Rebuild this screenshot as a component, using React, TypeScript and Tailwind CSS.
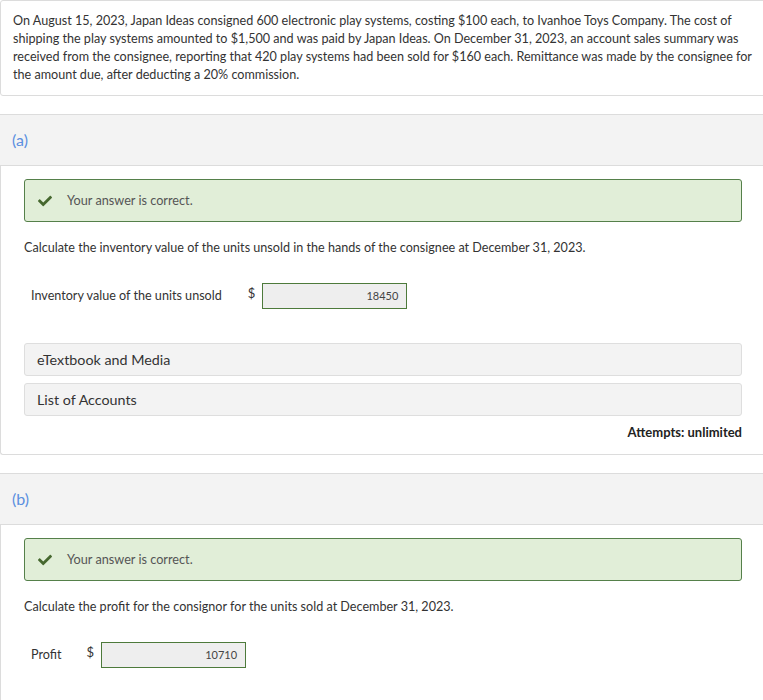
function Check() {
  return (
    <svg viewBox="0 0 512 512" className="w-[14px] h-[14px] fill-[#46682f]">
      <path d="M173.898 439.404l-166.4-166.4c-9.997-9.997-9.997-26.206 0-36.204l36.203-36.204c9.997-9.998 26.207-9.998 36.204 0L192 312.69 432.095 72.596c9.997-9.997 26.207-9.997 36.204 0l36.203 36.204c9.997 9.997 9.997 26.206 0 36.204l-294.4 294.401c-9.998 9.997-26.207 9.997-36.204-.001z" />
    </svg>
  );
}

function Correct() {
  return (
    <div className="h-[43px] flex items-center border border-[#55804a] bg-[#e1eed8] rounded-[3px] pl-[13px]">
      <Check />
      <span className="ml-[15px] text-[12.7px] text-[#555]">Your answer is correct.</span>
    </div>
  );
}

function Answer({ label, value, gap }: { label: string; value: string; gap: string }) {
  return (
    <div className="flex items-center pl-[7px] h-[26px]">
      <span className="text-[12.6px] text-[#333]">{label}</span>
      <span className={`text-[13px] text-[#333] -mt-[4px] ${gap}`}>$</span>
      <div className="ml-[7px] w-[145px] h-[26px] bg-[#eeeeee] border border-[#4d7a3b] flex items-center justify-end pr-[8px] text-[11px] text-[#444]">
        {value}
      </div>
    </div>
  );
}

function Header({ part }: { part: string }) {
  return (
    <div className="h-[52px] bg-[#f3f3f3] border-t border-b border-[#dcdcdc] flex items-center pl-[12px] text-[16px] text-[#5b8fe0]">
      {part}
    </div>
  );
}

export default function App() {
  return (
    <div className="w-[763px] overflow-hidden bg-white font-[Lato,sans-serif]">
      <div className="w-[770px]">
        <div className="border border-[#dcdcdc] rounded-[3px] px-[12px] pt-[11px] pb-[12px] h-[96px] text-[12.6px] leading-[18px] text-[#333] pr-[16px]">
          On August 15, 2023, Japan Ideas consigned 600 electronic play systems, costing $100 each, to Ivanhoe Toys Company. The cost of shipping the play systems amounted to $1,500 and was paid by Japan Ideas. On December 31, 2023, an account sales summary was received from the consignee, reporting that 420 play systems had been sold for $160 each. Remittance was made by the consignee for the amount due, after deducting a 20% commission.
        </div>

        <div className="mt-[18px]">
          <Header part="(a)" />
          <div className="border-l border-b border-[#dcdcdc] rounded-bl-[3px] pl-[23px] pr-[28px] pt-[13px] h-[289px]">
            <Correct />
            <p className="mt-[18px] text-[12.6px] text-[#333] leading-[16px]">
              Calculate the inventory value of the units unsold in the hands of the consignee at December 31, 2023.
            </p>
            <div className="mt-[27px]">
              <Answer label="Inventory value of the units unsold" value="18450" gap="ml-[26px]" />
            </div>
            <div className="mt-[34px] flex flex-col gap-[7px]">
              <div className="h-[33px] bg-[#f3f3f3] border border-[#dedede] rounded-[3px] flex items-center pl-[12px] text-[14.3px] text-[#333]">
                eTextbook and Media
              </div>
              <div className="h-[33px] bg-[#f3f3f3] border border-[#dedede] rounded-[3px] flex items-center pl-[12px] text-[14.3px] text-[#333]">
                List of Accounts
              </div>
            </div>
            <div className="mt-[7px] text-right text-[13px] font-bold text-[#222]">Attempts: unlimited</div>
          </div>
        </div>

        <div className="mt-[18px]">
          <Header part="(b)" />
          <div className="border-l border-[#dcdcdc] pl-[23px] pr-[28px] pt-[13px] h-[200px]">
            <Correct />
            <p className="mt-[18px] text-[12.6px] text-[#333] leading-[16px]">
              Calculate the profit for the consignor for the units sold at December 31, 2023.
            </p>
            <div className="mt-[27px]">
              <Answer label="Profit" value="10710" gap="ml-[25px]" />
            </div>
          </div>
        </div>
      </div>
    </div>
  );
}
